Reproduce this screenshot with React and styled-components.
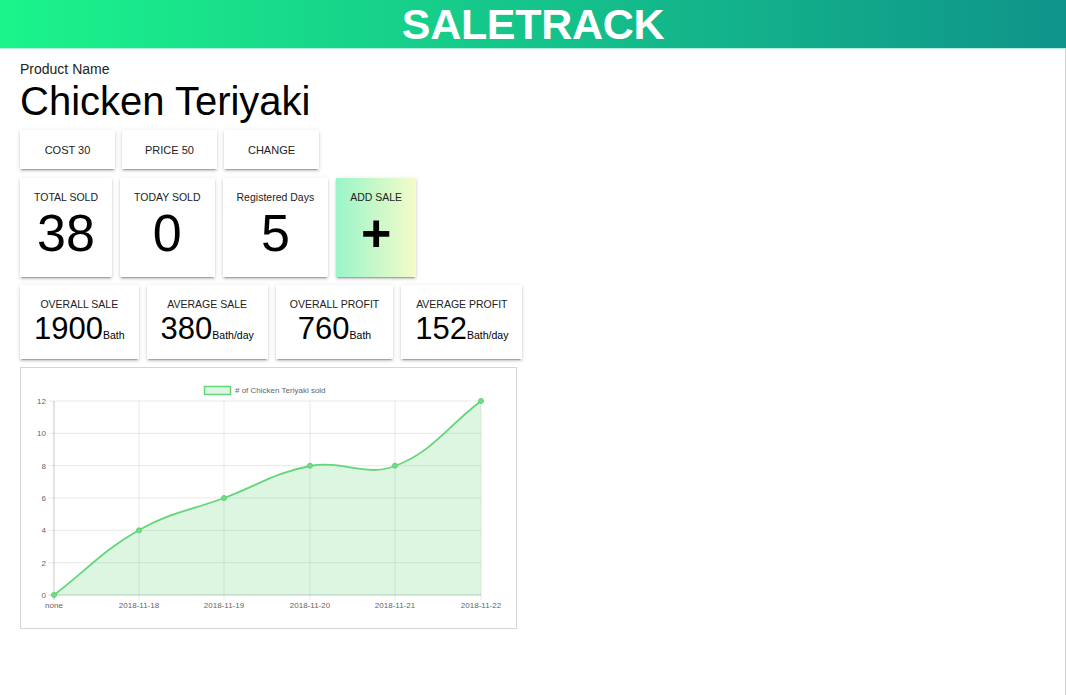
import React from "react";
import styled, { createGlobalStyle } from "styled-components";

const Global = createGlobalStyle`
  html, body { margin: 0; padding: 0; background: #fff; }
  body { font-family: "Liberation Sans", Arial, sans-serif; color: #000; }
`;

const Page = styled.div`
  min-height: 100vh;
  display: flex;
  flex-direction: column;
`;

const Header = styled.header`
  height: 48px;
  border-bottom: 1px solid #b4f0de;
  background: linear-gradient(to right, #1bf48b, #0f948a);
  display: flex;
  align-items: center;
  justify-content: center;
`;

const Title = styled.h1`
  margin: 0;
  font-size: 43px;
  line-height: 48px;
  font-weight: 700;
  color: #fff;
  letter-spacing: -0.3px;
`;

const Main = styled.main`
  flex: 1;
  padding: 12px 20px 20px;
  display: flex;
  flex-direction: column;
  align-items: flex-start;
  border-right: 1px solid #d2d2d2;
`;

const ProductLabel = styled.div`
  font-size: 14px;
  line-height: 16px;
  color: #222;
`;

const ProductName = styled.div`
  font-size: 40px;
  line-height: 46px;
  margin: 1px 0 6px;
`;

const paper = `
  background: #fff;
  box-shadow: 0px 3px 1px -2px rgba(0,0,0,0.2), 0px 2px 2px 0px rgba(0,0,0,0.14), 0px 1px 5px 0px rgba(0,0,0,0.12);
`;

const ButtonRow = styled.div`
  display: flex;
  gap: 7px;
  margin-bottom: 9px;
`;

const PriceButton = styled.div`
  ${paper}
  width: 95px;
  height: 39px;
  display: flex;
  align-items: center;
  justify-content: center;
  font-size: 11px;
  color: #222;
`;

const Row = styled.div`
  display: flex;
  gap: 8px;
  margin-bottom: 8px;
`;

const StatCard = styled.div`
  ${paper}
  ${(p) => p.$gradient && `background: linear-gradient(to right, #9af5c9, #f5fbc9);`}
  padding: 12px 14px 17px;
  text-align: center;
`;

const Label = styled.div`
  font-size: 10.5px;
  line-height: 14px;
  color: #222;
  white-space: nowrap;
`;

const BigNumber = styled.div`
  font-size: 52px;
  line-height: 53px;
  margin-top: 3px;
  font-weight: ${(p) => (p.$bold ? 700 : 400)};
`;

const MoneyCard = styled.div`
  ${paper}
  padding: 12px 14px 14px;
  text-align: center;
`;

const MoneyValue = styled.div`
  font-size: 31px;
  line-height: 32px;
  margin-top: 2px;
  white-space: nowrap;
`;

const Unit = styled.span`
  font-size: 10.5px;
  line-height: 1;
`;

const ChartCard = styled.div`
  border: 1px solid #d6d6d6;
  width: 495px;
  height: 260px;
`;

const ChartSvg = styled.svg`
  display: block;
  font-family: "Liberation Sans", Arial, sans-serif;
`;

const yTop = 401;
const yBottom = 595;
const yTicks = [12, 10, 8, 6, 4, 2, 0];
const xs = [54, 139, 224, 310, 395, 481];
const xLabels = ["none", "2018-11-18", "2018-11-19", "2018-11-20", "2018-11-21", "2018-11-22"];
const values = [0, 4, 6, 8, 8, 12];
const yOf = (v) => yBottom - (v / 12) * (yBottom - yTop);

const curve =
  "M54,595 C88,569 102.2,551 139,530 C170.2,512.2 190,510.7 224,498 C258.4,485.1 274.5,472.6 310,466 C342.9,459.8 364.8,477.5 395,466 C433.2,451.5 446.6,427 481,401";

function Chart() {
  return (
    <ChartCard>
      <ChartSvg width="495" height="260" viewBox="21 368 495 260">
        <rect x="204.5" y="386.5" width="26" height="8" fill="rgba(100,215,120,0.22)" stroke="#63d679" strokeWidth="1.5" />
        <text x="235" y="393" fontSize="8" fill="#666">
          # of Chicken Teriyaki sold
        </text>
        {yTicks.map((t) => {
          const y = yOf(t);
          return (
            <g key={t}>
              <line x1="49" x2="481" y1={y} y2={y} stroke={t === 0 ? "rgba(0,0,0,0.22)" : "rgba(0,0,0,0.09)"} strokeWidth="1" />
              <text x="46" y={y + 3} fontSize="8" fill="#666" textAnchor="end">
                {t}
              </text>
            </g>
          );
        })}
        {xs.map((x, i) => (
          <g key={x}>
            <line x1={x} x2={x} y1={yTop} y2="600" stroke={i === 0 ? "rgba(0,0,0,0.22)" : "rgba(0,0,0,0.09)"} strokeWidth="1" />
            <text x={x} y="608" fontSize="8" fill="#666" textAnchor="middle">
              {xLabels[i]}
            </text>
          </g>
        ))}
        <path d={`${curve} L481,595 L54,595 Z`} fill="rgba(100,215,120,0.22)" />
        <path d={curve} fill="none" stroke="#63d679" strokeWidth="1.8" />
        {xs.map((x, i) => (
          <circle key={x} cx={x} cy={yOf(values[i])} r="2.5" fill="#74dc8a" stroke="#5fd275" strokeWidth="1" />
        ))}
      </ChartSvg>
    </ChartCard>
  );
}

const stats = [
  { label: "TOTAL SOLD", value: "38" },
  { label: "TODAY SOLD", value: "0" },
  { label: "Registered Days", value: "5" },
];

const money = [
  { label: "OVERALL SALE", value: "1900", unit: "Bath" },
  { label: "AVERAGE SALE", value: "380", unit: "Bath/day" },
  { label: "OVERALL PROFIT", value: "760", unit: "Bath" },
  { label: "AVERAGE PROFIT", value: "152", unit: "Bath/day" },
];

export default function App() {
  return (
    <Page>
      <Global />
      <Header>
        <Title>SALETRACK</Title>
      </Header>
      <Main>
        <ProductLabel>Product Name</ProductLabel>
        <ProductName>Chicken Teriyaki</ProductName>
        <ButtonRow>
          <PriceButton>COST 30</PriceButton>
          <PriceButton>PRICE 50</PriceButton>
          <PriceButton>CHANGE</PriceButton>
        </ButtonRow>
        <Row>
          {stats.map((s) => (
            <StatCard key={s.label}>
              <Label>{s.label}</Label>
              <BigNumber>{s.value}</BigNumber>
            </StatCard>
          ))}
          <StatCard $gradient>
            <Label>ADD SALE</Label>
            <BigNumber $bold>+</BigNumber>
          </StatCard>
        </Row>
        <Row>
          {money.map((m) => (
            <MoneyCard key={m.label}>
              <Label>{m.label}</Label>
              <MoneyValue>
                {m.value}
                <Unit>{m.unit}</Unit>
              </MoneyValue>
            </MoneyCard>
          ))}
        </Row>
        <Chart />
      </Main>
    </Page>
  );
}
